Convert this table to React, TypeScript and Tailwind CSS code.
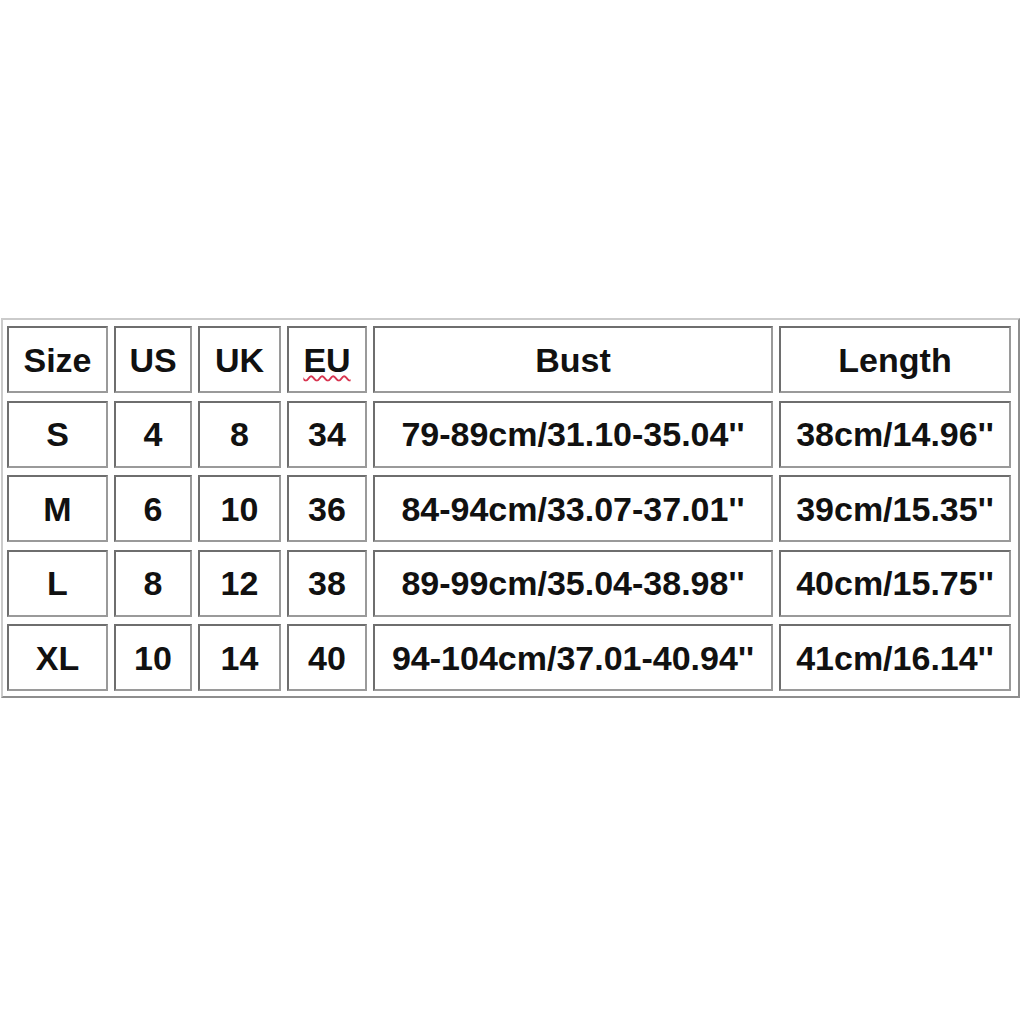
const rows = [
  ['Size', 'US', 'UK', 'EU', 'Bust', 'Length'],
  ['S', '4', '8', '34', "79-89cm/31.10-35.04''", "38cm/14.96''"],
  ['M', '6', '10', '36', "84-94cm/33.07-37.01''", "39cm/15.35''"],
  ['L', '8', '12', '38', "89-99cm/35.04-38.98''", "40cm/15.75''"],
  ['XL', '10', '14', '40', "94-104cm/37.01-40.94''", "41cm/16.14''"],
]

export default function App() {
  return (
    <div className="min-h-screen bg-white pt-[318px] pl-[1px] pr-[4px]">
      {/* size chart */}
      <div
        className="w-[1019px] border-2 border-t-[#cbcbcb] border-l-[#cbcbcb] border-r-[#8e8e8e] border-b-[#8e8e8e] pt-[6px] pb-[5px] pl-[4px]"
        style={{ fontFamily: '"Liberation Sans", Arial, sans-serif' }}
      >
        <div className="grid grid-cols-[101px_78px_83px_80px_400px_232px] gap-x-[6px] gap-y-[7.5px]">
          {rows.map((row, ri) =>
            row.map((cell, ci) => (
              <div
                key={ri + '-' + ci}
                className="h-[67px] flex items-center justify-center border-2 border-t-[#6e6e6e] border-l-[#6e6e6e] border-r-[#9a9a9a] border-b-[#9a9a9a] bg-white text-[34px] font-bold text-[#111] leading-none"
              >
                {cell === 'EU' ? (
                  <span className="underline decoration-wavy decoration-[#d8344f] decoration-[1.5px] underline-offset-[3px]">
                    EU
                  </span>
                ) : (
                  cell
                )}
              </div>
            ))
          )}
        </div>
      </div>
    </div>
  )
}
